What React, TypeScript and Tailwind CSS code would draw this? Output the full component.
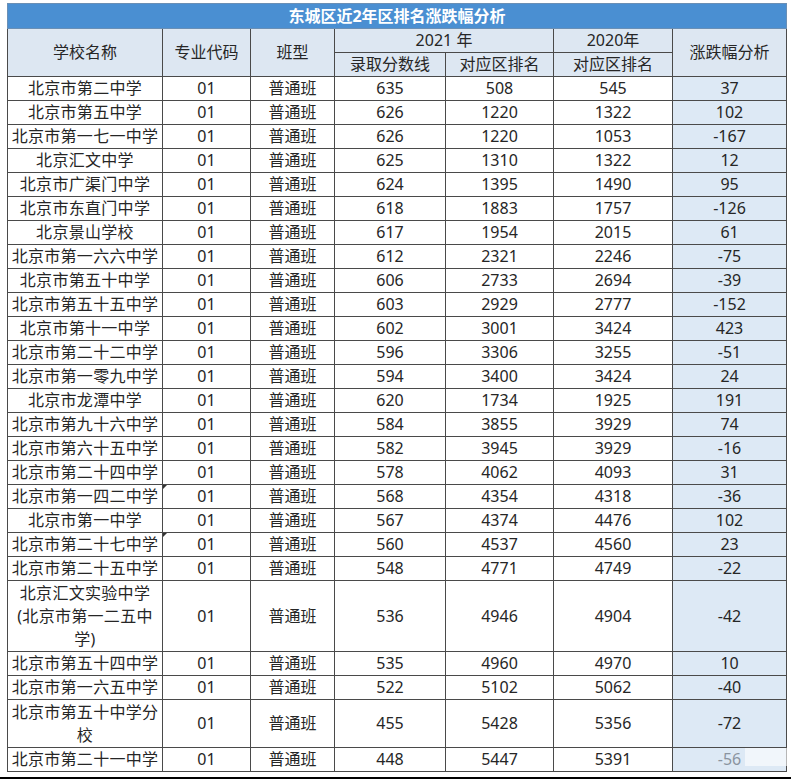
import React from "react";

type Row = {
  name: React.ReactNode;
  score: number;
  rank21: number;
  rank20: number;
  diff: number;
  h?: string;
};

const rows: Row[] = [
  { name: "北京市第二中学", score: 635, rank21: 508, rank20: 545, diff: 37 },
  { name: "北京市第五中学", score: 626, rank21: 1220, rank20: 1322, diff: 102 },
  { name: "北京市第一七一中学", score: 626, rank21: 1220, rank20: 1053, diff: -167 },
  { name: "北京汇文中学", score: 625, rank21: 1310, rank20: 1322, diff: 12 },
  { name: "北京市广渠门中学", score: 624, rank21: 1395, rank20: 1490, diff: 95 },
  { name: "北京市东直门中学", score: 618, rank21: 1883, rank20: 1757, diff: -126 },
  { name: "北京景山学校", score: 617, rank21: 1954, rank20: 2015, diff: 61 },
  { name: "北京市第一六六中学", score: 612, rank21: 2321, rank20: 2246, diff: -75 },
  { name: "北京市第五十中学", score: 606, rank21: 2733, rank20: 2694, diff: -39 },
  { name: "北京市第五十五中学", score: 603, rank21: 2929, rank20: 2777, diff: -152 },
  { name: "北京市第十一中学", score: 602, rank21: 3001, rank20: 3424, diff: 423 },
  { name: "北京市第二十二中学", score: 596, rank21: 3306, rank20: 3255, diff: -51 },
  { name: "北京市第一零九中学", score: 594, rank21: 3400, rank20: 3424, diff: 24 },
  { name: "北京市龙潭中学", score: 620, rank21: 1734, rank20: 1925, diff: 191 },
  { name: "北京市第九十六中学", score: 584, rank21: 3855, rank20: 3929, diff: 74 },
  { name: "北京市第六十五中学", score: 582, rank21: 3945, rank20: 3929, diff: -16 },
  { name: "北京市第二十四中学", score: 578, rank21: 4062, rank20: 4093, diff: 31 },
  { name: "北京市第一四二中学", score: 568, rank21: 4354, rank20: 4318, diff: -36 },
  { name: "北京市第一中学", score: 567, rank21: 4374, rank20: 4476, diff: 102 },
  { name: "北京市第二十七中学", score: 560, rank21: 4537, rank20: 4560, diff: 23 },
  { name: "北京市第二十五中学", score: 548, rank21: 4771, rank20: 4749, diff: -22 },
  {
    name: (
      <>
        北京汇文实验中学
        <br />
        (北京市第一二五中
        <br />
        学)
      </>
    ),
    score: 536,
    rank21: 4946,
    rank20: 4904,
    diff: -42,
    h: "h-[71px]",
  },
  { name: "北京市第五十四中学", score: 535, rank21: 4960, rank20: 4970, diff: 10 },
  { name: "北京市第一六五中学", score: 522, rank21: 5102, rank20: 5062, diff: -40 },
  {
    name: (
      <>
        北京市第五十中学分
        <br />
        校
      </>
    ),
    score: 455,
    rank21: 5428,
    rank20: 5356,
    diff: -72,
    h: "h-[48px]",
  },
  { name: "北京市第二十一中学", score: 448, rank21: 5447, rank20: 5391, diff: -56, h: "h-[23px]" },
];

const cell = "border border-[#4a4a4a] p-0 text-center align-middle";
const head = cell + " bg-[#dde7f2] font-normal";

export default function App() {
  return (
    <div
      className="relative w-[791px] h-[779px] bg-white text-[#262626] overflow-hidden"
      style={{ fontFamily: '"Noto Sans", "Noto Sans CJK SC", sans-serif' }}
    >
      <div className="pl-[7px] pt-[3px]">
        <table className="border-collapse table-fixed w-[779px] text-[16px] leading-[23px]">
          <colgroup>
            <col className="w-[155px]" />
            <col className="w-[88px]" />
            <col className="w-[84px]" />
            <col className="w-[111px]" />
            <col className="w-[108px]" />
            <col className="w-[119px]" />
            <col className="w-[114px]" />
          </colgroup>
          <thead>
            <tr className="h-[25px]">
              <th
                colSpan={7}
                className="border border-[#6a8fb5] bg-[#4a8fd2] text-white text-[16px] font-bold text-center p-0"
              >
                东城区近2年区排名涨跌幅分析
              </th>
            </tr>
            <tr className="h-[24px]">
              <th rowSpan={2} className={head}>学校名称</th>
              <th rowSpan={2} className={head}>专业代码</th>
              <th rowSpan={2} className={head}>班型</th>
              <th colSpan={2} className={head}>2021 年</th>
              <th className={head}>2020年</th>
              <th rowSpan={2} className={head}>涨跌幅分析</th>
            </tr>
            <tr className="h-[24px]">
              <th className={head}>录取分数线</th>
              <th className={head}>对应区排名</th>
              <th className={head}>对应区排名</th>
            </tr>
          </thead>
          <tbody>
            {rows.map((r, i) => (
              <tr key={i} className={r.h ?? "h-[23.9px]"}>
                <td className={cell + " whitespace-nowrap tracking-[0.3px]"}>{r.name}</td>
                <td className={cell + " relative"}>
                  01
                  {(i === 17 || i === 19) && (
                    <span className="absolute left-0 top-0 w-0 h-0 border-t-[4px] border-t-[#333] border-r-[4px] border-r-transparent" />
                  )}
                </td>
                <td className={cell}>普通班</td>
                <td className={cell}>{r.score}</td>
                <td className={cell}>{r.rank21}</td>
                <td className={cell}>{r.rank20}</td>
                <td className={cell + " bg-[#dde9f5] relative"}>
                  {i === rows.length - 1 ? (
                    <span className="text-[#8a94a0]">-56</span>
                  ) : (
                    r.diff
                  )}
                </td>
              </tr>
            ))}
          </tbody>
        </table>
      </div>
      <div className="absolute left-[745px] top-[748px] w-[50px] h-[18px] bg-white/60" />
      <div className="absolute left-0 right-0 bottom-0 h-[2px] bg-black" />
    </div>
  );
}
